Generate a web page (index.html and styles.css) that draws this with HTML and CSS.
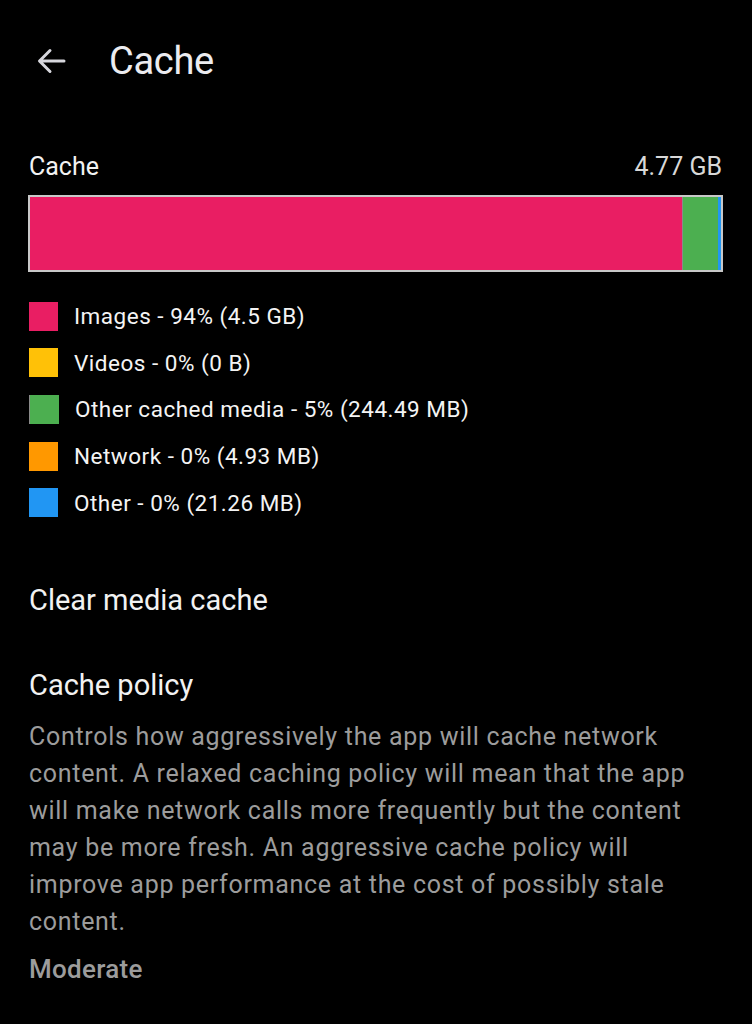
FILE: index.html
```html
<!DOCTYPE html>
<html lang="en">
<head>
    <meta charset="UTF-8">
    <meta name="viewport" content="width=device-width, initial-scale=1.0">
    <title>Cache</title>
    <link rel="stylesheet" href="styles.css">
</head>
<body>
    <header class="app-bar">
        <span class="back-icon">
            <svg width="32" height="32" viewBox="0 0 32 32">
                <path d="M29 16H5M15 5.5L4.5 16 15 26.5" fill="none" stroke="#d6d6dc" stroke-width="3" stroke-linecap="round" stroke-linejoin="round"/>
            </svg>
        </span>
        <span class="app-title">Cache</span>
    </header>

    <main class="content">
        <section class="usage">
            <div class="usage-head">
                <span>Cache</span>
                <span class="usage-total">4.77 GB</span>
            </div>
            <div class="usage-bar">
                <div class="seg seg-images" style="width: 94.3%"></div>
                <div class="seg seg-media" style="width: 5.1%"></div>
                <div class="seg seg-other" style="width: 0.4%"></div>
            </div>
            <ul class="legend">
                <li><span class="swatch seg-images"></span>Images - 94% (4.5 GB)</li>
                <li><span class="swatch seg-videos"></span>Videos - 0% (0 B)</li>
                <li><span class="swatch seg-media"></span>Other cached media - 5% (244.49 MB)</li>
                <li><span class="swatch seg-network"></span>Network - 0% (4.93 MB)</li>
                <li><span class="swatch seg-other"></span>Other - 0% (21.26 MB)</li>
            </ul>
        </section>

        <div class="pref pref-clear">Clear media cache</div>

        <div class="pref pref-policy">
            <div class="pref-title">Cache policy</div>
            <p class="pref-desc">Controls how aggressively the app will cache network content. A relaxed caching policy will mean that the app will make network calls more frequently but the content may be more fresh. An aggressive cache policy will improve app performance at the cost of possibly stale content.</p>
            <div class="pref-value">Moderate</div>
        </div>
    </main>
</body>
</html>
```

FILE: styles.css
```css
body {
    margin: 0;
    background: #000;
    color: #f2f2f2;
    font-family: Roboto, "Noto Sans", sans-serif;
    width: 752px;
    height: 1024px;
    overflow: hidden;
}

.app-bar {
    display: flex;
    align-items: center;
    height: 122px;
    padding-left: 35px;
}

.back-icon {
    display: flex;
    width: 32px;
    height: 32px;
}

.app-title {
    margin-left: 42px;
    font-size: 38px;
    color: #ececf0;
    letter-spacing: -0.3px;
}

.content {
    padding: 0 29px 0 29px;
}

.usage-head {
    display: flex;
    justify-content: space-between;
    font-size: 25px;
    line-height: 30px;
    margin-top: 30px;
    padding-right: 1px;
}

.usage-total {
    color: #d8d8d8;
}

.usage-bar {
    display: flex;
    height: 73px;
    margin-top: 13px;
    border: 2px solid #c8c8c8;
    margin-left: -1px;
}

.seg-images { background: #e91e63; }
.seg-videos { background: #ffc107; }
.seg-media { background: #4caf50; }
.seg-network { background: #ff9800; }
.seg-other { background: #2196f3; }

.seg-media {
    border-left: 1px solid #8a8a8a;
}

.legend {
    list-style: none;
    margin: 21px 0 0 0;
    padding: 0;
}

.legend li {
    display: flex;
    align-items: center;
    height: 46.6px;
    font-size: 22.5px;
    letter-spacing: 0.5px;
    color: #f4f4f4;
}

.swatch {
    width: 29px;
    height: 29px;
    margin-right: 16px;
}

.pref {
    font-size: 29px;
}

.pref-clear {
    margin-top: 56px;
    line-height: 36px;
}

.pref-policy {
    margin-top: 49px;
}

.pref-title {
    line-height: 36px;
}

.pref-desc {
    margin: 15px -4px 0 0;
    font-size: 25px;
    letter-spacing: 0.7px;
    line-height: 37px;
    color: #9c9c9c;
}

.pref-value {
    margin-top: 14px;
    font-size: 26px;
    font-weight: 500;
    letter-spacing: 0.3px;
    color: #9c9c9c;
}
```
